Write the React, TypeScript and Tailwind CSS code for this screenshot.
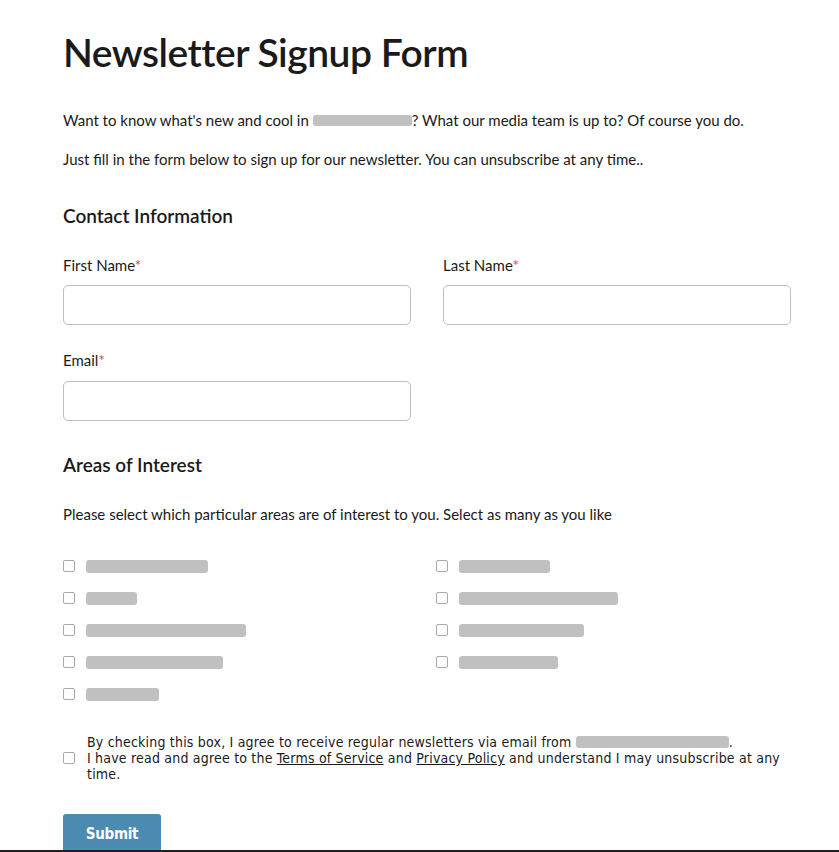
import React from "react";

const Blob = ({ w, h = 12, cls = "" }: { w: number; h?: number; cls?: string }) => (
  <span
    className={`inline-block bg-[#c0c0c0] rounded-[3px] align-middle ${cls}`}
    style={{ width: w, height: h }}
  />
);

const Box = () => (
  <span className="inline-block w-[12px] h-[12px] border border-[#a9a9a9] rounded-[2px] bg-white shrink-0" />
);

const Req = () => <span className="text-[#e0403a]">*</span>;

const leftItems = [122, 51, 160, 137, 73];
const rightItems = [91, 159, 125, 99];

export default function App() {
  return (
    <div className="min-h-[852px] bg-white text-[#1a1a1a] relative overflow-hidden" style={{ fontFamily: "Lato, 'Noto Sans', sans-serif" }}>
      <div className="pl-[63px] pr-[48px] pt-[29px]">
        <h1 className="text-[39px] font-semibold leading-[46px] tracking-[-0.5px]">Newsletter Signup Form</h1>
        <p className="mt-[35px] text-[15px] leading-[20px]">
          Want to know what's new and cool in <Blob w={99} h={11} cls="-mt-[3px]" />? What our media team is up to? Of course you do.
        </p>
        <p className="mt-[19px] text-[15px] leading-[20px]">
          Just fill in the form below to sign up for our newsletter. You can unsubscribe at any time..
        </p>

        <h2 className="mt-[35px] text-[19px] font-semibold leading-[24px]">Contact Information</h2>

        <div className="mt-[27px] grid grid-cols-[348px_348px] gap-x-[32px]">
          <div>
            <label className="block text-[15px] leading-[20px]">First Name<Req /></label>
            <input className="mt-[10px] block w-full h-[40px] border border-[#bdbdbd] rounded-[5px] outline-none" />
          </div>
          <div>
            <label className="block text-[15px] leading-[20px]">Last Name<Req /></label>
            <input className="mt-[10px] block w-full h-[40px] border border-[#bdbdbd] rounded-[5px] outline-none" />
          </div>
          <div className="mt-[25px]">
            <label className="block text-[15px] leading-[20px]">Email<Req /></label>
            <input className="mt-[11px] block w-full h-[40px] border border-[#bdbdbd] rounded-[5px] outline-none" />
          </div>
        </div>

        <h2 className="mt-[32px] text-[19px] font-semibold leading-[24px]">Areas of Interest</h2>
        <p className="mt-[27px] text-[15px] leading-[20px]">
          Please select which particular areas are of interest to you. Select as many as you like
        </p>

        <div className="mt-[26px] grid grid-cols-[373px_1fr]">
          <div className="flex flex-col">
            {leftItems.map((w, i) => (
              <div key={i} className="h-[32px] flex items-center gap-[11px]">
                <Box />
                <Blob w={w} h={13} />
              </div>
            ))}
          </div>
          <div className="flex flex-col">
            {rightItems.map((w, i) => (
              <div key={i} className="h-[32px] flex items-center gap-[11px]">
                <Box />
                <Blob w={w} h={13} />
              </div>
            ))}
          </div>
        </div>

        <div className="mt-[24px] flex items-center gap-[12px]">
          <Box />
          <div className="text-[14px] leading-[16px] tracking-[0.2px]" style={{ fontFamily: "'Liberation Sans Narrow', 'DejaVu Sans Condensed', Lato, sans-serif" }}>
            <div>
              By checking this box, I agree to receive regular newsletters via email from <Blob w={153} h={12} cls="-mt-[3px]" />.
            </div>
            <div>
              I have read and agree to the <a className="underline">Terms of Service</a> and <a className="underline">Privacy Policy</a> and understand I may unsubscribe at any
            </div>
            <div>time.</div>
          </div>
        </div>

        <button className="mt-[32px] w-[98px] h-[44px] bg-[#4b8ab1] rounded-t-[3px] text-white font-bold text-[15px] pb-[4px] tracking-[-0.3px]" style={{ fontFamily: "'Liberation Sans Narrow', 'DejaVu Sans Condensed', sans-serif" }}>
          Submit
        </button>
      </div>
      <div className="absolute left-0 right-0 top-[850px] h-[2px] bg-[#221e20]" />
    </div>
  );
}
